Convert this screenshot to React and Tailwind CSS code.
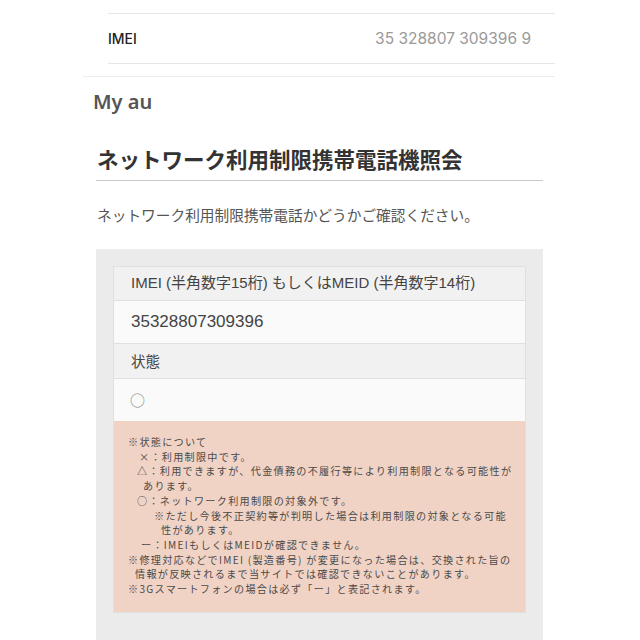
export default function App() {
  const jp = { fontFamily: '"Noto Sans CJK JP", "Noto Sans", sans-serif' };
  const mixed = { fontFamily: '"Liberation Sans", "Noto Sans CJK JP", sans-serif' };
  const notes = [
    { t: '※状態について', pl: 'pl-[0px]' },
    { t: '×：利用制限中です。', pl: 'pl-[11px]' },
    { t: '△：利用できますが、代金債務の不履行等により利用制限となる可能性が', pl: 'pl-[9px]' },
    { t: 'あります。', pl: 'pl-[15px]' },
    { t: '○：ネットワーク利用制限の対象外です。', pl: 'pl-[9px]' },
    { t: '※ただし今後不正契約等が判明した場合は利用制限の対象となる可能', pl: 'pl-[26px]' },
    { t: '性があります。', pl: 'pl-[33px]' },
    { t: 'ー：IMEIもしくはMEIDが確認できません。', pl: 'pl-[13px]' },
    { t: '※修理対応などでIMEI (製造番号) が変更になった場合は、交換された旨の', pl: 'pl-[0px]' },
    { t: '情報が反映されるまで当サイトでは確認できないことがあります。', pl: 'pl-[7px]' },
    { t: '※3Gスマートフォンの場合は必ず「ー」と表記されます。', pl: 'pl-[0px]' },
  ];
  return (
    <div className="w-[640px] h-[640px] bg-white overflow-hidden" style={jp}>
      <div className="h-[13px]" />
      <div className="ml-[108px] w-[447px] border-t border-b border-[#e6e6e6] h-[51px] flex items-center justify-between">
        <span className="text-[14px] text-[#222]" style={{ fontFamily: 'Inter, "Noto Sans", sans-serif', fontWeight: 500 }}>IMEI</span>
        <span className="text-[15.5px] text-[#9a9a9a] mr-[24px]" style={{ fontFamily: 'Inter, "Noto Sans", sans-serif' }}>35 328807 309396 9</span>
      </div>
      <div className="h-[12px]" />
      <div className="ml-[83px] w-[472px] border-t border-[#ececec]" />
      <div className="ml-[93px] h-[48px] flex items-center pt-[1px]">
        <span className="text-[20px] text-[#555] font-semibold" style={{ fontFamily: '"Noto Sans", sans-serif' }}>My au</span>
      </div>
      <div className="ml-[96px] w-[447px]">
        <div className="h-[56px] flex items-end pb-[7px] border-b border-[#c9c9c9] pl-[1px]">
          <span className="text-[21.5px] leading-[28px] font-bold text-[#333] whitespace-nowrap">ネットワーク利用制限携帯電話機照会</span>
        </div>
        <div className="h-[68px] flex items-center pl-[1px]">
          <span className="text-[14.7px] text-[#555] whitespace-nowrap">ネットワーク利用制限携帯電話かどうかご確認ください。</span>
        </div>
        <div className="bg-[#ebebeb] pt-[17px] px-[17px] pb-[40px]">
          <div className="border border-[#e0e0e0]">
            <div className="bg-[#f1f1f1] h-[34px] flex items-center px-[17px] border-b border-[#e0e0e0]">
              <span className="text-[15px] text-[#444] whitespace-nowrap" style={mixed}>IMEI (半角数字15桁) もしくはMEID (半角数字14桁)</span>
            </div>
            <div className="bg-[#fafafa] h-[43px] flex items-center px-[17px] border-b border-[#e0e0e0]">
              <span className="text-[17px] text-[#444]" style={mixed}>35328807309396</span>
            </div>
            <div className="bg-[#f1f1f1] h-[35px] flex items-center px-[17px] border-b border-[#e0e0e0]">
              <span className="text-[14.5px] text-[#444]">状態</span>
            </div>
            <div className="bg-[#fafafa] h-[42px] flex items-center px-[16px]">
              <span className="text-[15px] text-[#888]">○</span>
            </div>
            <div className="bg-[#f1d3c5] pt-[14px] pb-[15px] pl-[14px] pr-[6px]">
              {notes.map((n, i) => (
                <div key={i} className={`text-[10.1px] leading-[14.7px] tracking-[1.3px] text-[#4a4a4a] whitespace-nowrap ${n.pl}`}>{n.t}</div>
              ))}
            </div>
          </div>
        </div>
      </div>
    </div>
  );
}
